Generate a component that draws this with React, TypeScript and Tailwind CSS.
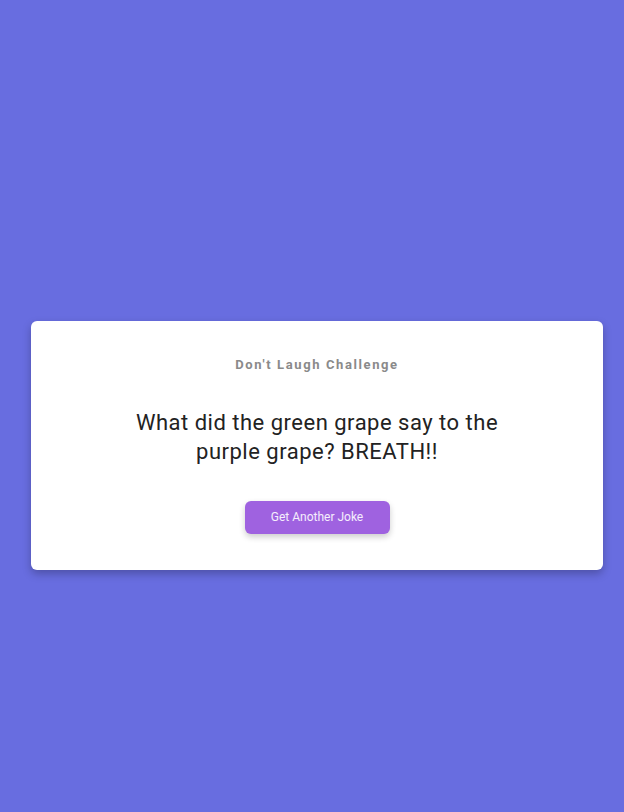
export default function App() {
  return (
    <div className="min-h-[812px] bg-[#686de0] pt-[321px] font-['Roboto',sans-serif]">
      <div className="ml-[31px] flex h-[249px] w-[572px] flex-col items-center rounded-md bg-white pt-[34px] shadow-[0_4px_8px_rgba(0,0,0,0.25)]">
        <p className="text-[13px] font-bold tracking-[1.6px] text-[#8a8a8a]">Don't Laugh Challenge</p>
        <p className="mt-[33px] w-[380px] text-center text-[22px] leading-[29px] tracking-[0.5px] text-[#222]">
          What did the green grape say to the purple grape? BREATH!!
        </p>
        <button className="mt-[35px] h-[33px] w-[145px] rounded-md bg-[#9f62e0] text-[12px] text-white/90 shadow-[0_3px_6px_rgba(0,0,0,0.2)]">
          Get Another Joke
        </button>
      </div>
    </div>
  );
}
